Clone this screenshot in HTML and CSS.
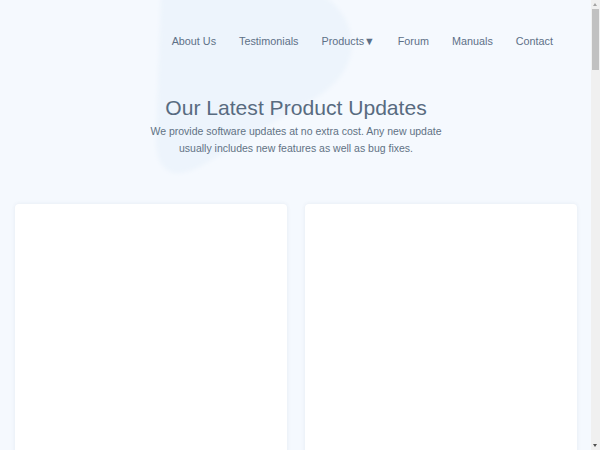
FILE: index.html
```html
<!DOCTYPE html>
<html lang="en">
<head>
    <meta charset="UTF-8">
    <meta name="viewport" content="width=device-width, initial-scale=1.0">
    <title>Product Updates</title>
    <link rel="stylesheet" href="styles.css">
</head>
<body>
    <svg class="blob" width="260" height="200" viewBox="0 0 260 200">
        <defs>
            <filter id="soft"><feGaussianBlur stdDeviation="2"></feGaussianBlur></filter>
        </defs>
        <path d="M 8 -10 L 160 -10 C 205 10, 222 70, 150 105 L 50 165 C 20 182, 3 172, 3 140 Z" filter="url(#soft)"></path>
    </svg>

    <header class="header">
        <nav class="nav">
            <a href="#">About Us</a>
            <a href="#">Testimonials</a>
            <a href="#">Products&#9660;</a>
            <a href="#">Forum</a>
            <a href="#">Manuals</a>
            <a href="#">Contact</a>
        </nav>
    </header>

    <section class="hero">
        <h1>Our Latest Product Updates</h1>
        <p>We provide software updates at no extra cost. Any new update<br>usually includes new features as well as bug fixes.</p>
    </section>

    <section class="updates">
        <div class="card"></div>
        <div class="card"></div>
        <div class="card"></div>
        <div class="card"></div>
        <div class="card"></div>
        <div class="card"></div>
        <div class="card"></div>
        <div class="card"></div>
        <div class="card"></div>
        <div class="card"></div>
    </section>

    <div class="scrollbar">
        <span class="arrow arrow-up"></span>
        <span class="thumb"></span>
        <span class="arrow arrow-down"></span>
    </div>
</body>
</html>
```

FILE: styles.css
```css
body {
    margin: 0 9px 0 0;
    background-color: #f5f9fe;
    font-family: "Liberation Sans", Arial, sans-serif;
    color: #5a6d82;
    position: relative;
}

.blob {
    position: absolute;
    top: 0;
    left: 153px;
    z-index: 0;
}

.blob path {
    fill: #edf4fc;
}

.header {
    position: relative;
    height: 82px;
    display: flex;
    justify-content: flex-end;
    align-items: center;
    padding-right: 38px;
}

.nav {
    display: flex;
    gap: 23px;
}

.nav a {
    color: #5d7087;
    font-size: 10.8px;
    text-decoration: none;
}

.hero {
    position: relative;
    text-align: center;
    padding: 13px 14px 0 15px;
    height: 109px;
}

.hero h1 {
    margin: 0;
    font-size: 21.1px;
    font-weight: normal;
    line-height: 26px;
    color: #586b80;
}

.hero p {
    margin: 2px 0 0;
    font-size: 10.5px;
    line-height: 17px;
    color: #617284;
}

.updates {
    position: relative;
    display: grid;
    grid-template-columns: 1fr 1fr;
    gap: 18px;
    padding: 0 14px 40px 15px;
}

.card {
    height: 560px;
    background-color: #fff;
    border-radius: 4px;
    box-shadow: 0 0 4px rgba(40, 60, 100, 0.08);
}

/* fake browser scrollbar */
.scrollbar {
    position: fixed;
    top: 0;
    right: 0;
    width: 9px;
    height: 100%;
    background-color: #f0f0f0;
}

.thumb {
    position: absolute;
    top: 9px;
    left: 1px;
    width: 7px;
    height: 61px;
    background-color: #c1c1c1;
}

.arrow {
    position: absolute;
    left: 2px;
    width: 0;
    height: 0;
    border-left: 2.5px solid transparent;
    border-right: 2.5px solid transparent;
}

.arrow-up {
    top: 3px;
    border-bottom: 3px solid #a3a3a3;
}

.arrow-down {
    bottom: 3px;
    border-top: 3px solid #505050;
}
```
